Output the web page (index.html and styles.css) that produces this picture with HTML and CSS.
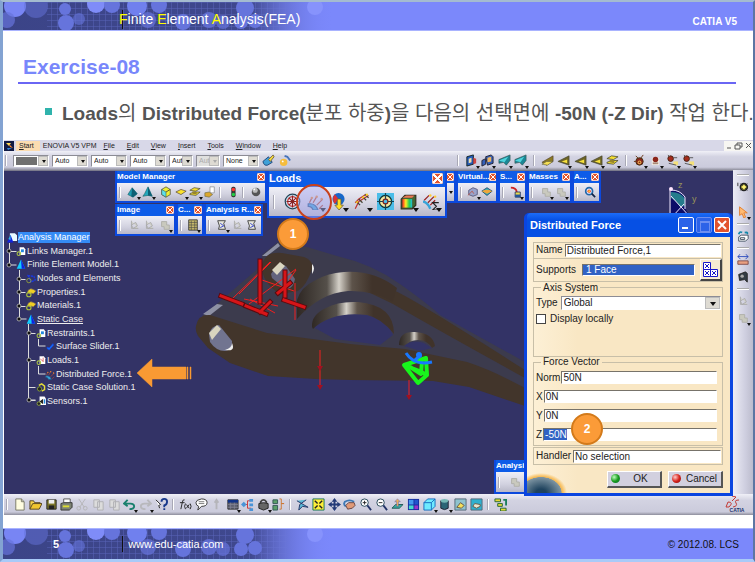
FILE: index.html
```html
<!DOCTYPE html>
<html lang="ko">
<head>
<meta charset="utf-8">
<title>Exercise-08</title>
<link rel="stylesheet" href="styles.css">
</head>
<body>
<svg class="defs" aria-hidden="true">
  <defs>
    <linearGradient id="fade" x1="0" x2="1"><stop offset="0" stop-color="#303873" stop-opacity=".85"/><stop offset=".75" stop-color="#303873" stop-opacity=".8"/><stop offset="1" stop-color="#7a87fa" stop-opacity="0"/></linearGradient>
    <pattern id="mesh" width="6" height="6" patternUnits="userSpaceOnUse"><path d="M0 .5H6M.5 0V6" stroke="#6b78d8" stroke-opacity=".5"/></pattern>
    <linearGradient id="shine" x1="0" x2="1"><stop offset="0" stop-color="#2f2824"/><stop offset=".3" stop-color="#55504a"/><stop offset=".42" stop-color="#d4d0c8"/><stop offset=".55" stop-color="#5d534a"/><stop offset=".75" stop-color="#40332a"/><stop offset="1" stop-color="#40332a"/></linearGradient>
    <linearGradient id="rain"><stop offset="0" stop-color="#f22"/><stop offset=".35" stop-color="#fe2"/><stop offset=".7" stop-color="#2c5"/><stop offset="1" stop-color="#2bd"/></linearGradient>
  </defs>
  <symbol id="bubbles" viewBox="0 0 330 30">
    <rect width="330" height="30" fill="url(#fade)"/>
    <rect x="44" width="240" height="30" fill="url(#mesh)" opacity=".6"/>
    <g fill="#6674dc"><circle cx="12" cy="4" r="11" fill="#7885f4"/><circle cx="33" cy="4" r="12" opacity=".5"/><circle cx="4" cy="18" r="8" opacity=".7"/><circle cx="62" cy="7" r="6"/><circle cx="63" cy="21" r="8"/><circle cx="76" cy="17" r="6" opacity=".6"/><circle cx="93" cy="2" r="9" fill="#7f8cf8"/><circle cx="109" cy="3" r="8"/><circle cx="134" cy="4" r="10" fill="#7080ee"/><circle cx="156" cy="3" r="8"/><circle cx="145" cy="18" r="8" opacity=".7"/><circle cx="180" cy="20" r="8"/><circle cx="206" cy="18" r="8" opacity=".8"/><circle cx="220" cy="20" r="7" opacity=".7"/><circle cx="242" cy="6" r="9"/><circle cx="238" cy="20" r="7"/><circle cx="252" cy="19" r="7"/><circle cx="312" cy="5" r="8" fill="#8793fc"/></g>
  </symbol>
  <symbol id="pyr" viewBox="0 0 14 14"><path d="M6 2 1 10l6 3 5-4z" fill="#1f9db4" stroke="#155" stroke-width=".6"/><path d="M6 2 5 12l2 1 5-4z" fill="#0d5f74"/></symbol>
  <symbol id="pyr2" viewBox="0 0 14 14"><path d="m7 1-4 8-2 3 6-1 5 1z" fill="#25a7bb" stroke="#155" stroke-width=".6"/><path d="M7 1v10l5 1z" fill="#0d5f74"/></symbol>
  <symbol id="cube" viewBox="0 0 14 14"><path d="m2 4 5-3 5 3v6l-5 3-5-3z" fill="#ee3" stroke="#443" stroke-width=".8"/><path d="m2 4 5 3v6l-5-3z" fill="#5de0e8" stroke="#344" stroke-width=".6"/><path d="m7 7 5-3" stroke="#443" fill="none"/></symbol>
  <symbol id="plate" viewBox="0 0 14 14"><path d="m1 7 6-3 6 2-6 4z" fill="#fbe32e" stroke="#543" stroke-width=".8"/></symbol>
  <symbol id="beam" viewBox="0 0 14 14"><path d="m1 5 5-3 7 1-5 3zM1 9l5-2 7 0-5 4-7-1z" fill="#f5df30" stroke="#443" stroke-width=".8"/><path d="m4 6 5 1v3l-5-1z" fill="#988628"/></symbol>
  <symbol id="part" viewBox="0 0 14 14"><path d="M7 1h5v7H7z" fill="#fff" stroke="#777" stroke-width=".7"/><path d="m1 8 5-1 4 3-4 3-5-1z" fill="#dba72c" stroke="#664" stroke-width=".7"/></symbol>
  <symbol id="light" viewBox="0 0 14 14"><rect x="5" y="1" width="5" height="12" rx="2" fill="#333"/><circle cx="7.500" cy="4" r="2" fill="#f33"/><circle cx="7.500" cy="10" r="2" fill="#2c4"/></symbol>
  <symbol id="ball" viewBox="0 0 14 14"><circle cx="7" cy="7" r="5" fill="#555"/><circle cx="6" cy="5" r="3" fill="#bbb"/><circle cx="5" cy="4" r="1" fill="#fff"/></symbol>
  <symbol id="ghost" viewBox="0 0 14 14"><path d="M4 2v9h8M4 7l5-3 2 4-5 3z" fill="#d0d0c8" stroke="#a9a9aa"/></symbol>
  <symbol id="ghost2" viewBox="0 0 14 14"><path d="M3 3h6v4h3v5H6V9H3z" fill="#c9c9be" stroke="#adada6"/></symbol>
  <symbol id="calc" viewBox="0 0 14 14"><path d="M2 1h10v12H2z" fill="#c6b96a" stroke="#333"/><path d="M2 4h10M2 7h10M2 10h10M5 2v11M9 2v11" stroke="#444" stroke-width=".7"/></symbol>
  <symbol id="report" viewBox="0 0 14 14"><path d="M2 2h9l-2 3 2 7H3l1-4z" fill="#e8e8de" stroke="#333"/><path d="m5 5 4 3-4 2" stroke="#23c" fill="none"/></symbol>
  <symbol id="target" viewBox="0 0 14 14"><circle cx="7" cy="7" r="6" fill="#c5e0ef" stroke="#245"/><circle cx="7" cy="7" r="4" fill="#eef" stroke="#c33"/><path d="M7 2v10M2 7h10M4 4l6 6M4 10l6-6" stroke="#822"/></symbol>
  <symbol id="dforce" viewBox="0 0 14 14"><path d="M1 9q6-1 8 5H5q-1-3-4-3z" fill="#38a4d8" stroke="#258"/><path d="M2 8l2-4M5 8l3-5M8 10l5-5M10 13l3-3" stroke="#b24b34"/><g fill="#e83"><circle cx="4" cy="4" r="1"/><circle cx="8" cy="3" r="1"/><circle cx="12" cy="5" r="1"/></g></symbol>
  <symbol id="grav" viewBox="0 0 14 14"><circle cx="7" cy="5" r="5" fill="#1768c8"/><path d="M4 1q-3 4 0 8L7 5z" fill="#d33"/><path d="M6 5h3v5h2l-3.500 4L4 10h2z" fill="#fd2" stroke="#653" stroke-width=".6"/></symbol>
  <symbol id="hatch" viewBox="0 0 14 14"><path d="M1 13 4 7l8-5M1 8l3-3 6-4" stroke="#b33" fill="none"/><path d="m2 7 3 3M4 5l3 3M7 3l3 3M9 1l3 3" stroke="#443"/><path d="m2 7 1 1M7 3l1 1M10 1l1 1" stroke="#fc2" stroke-width="2"/></symbol>
  <symbol id="bearing" viewBox="0 0 14 14"><rect width="14" height="14" fill="#4bbde8"/><circle cx="7" cy="7" r="5" fill="#f6e7a0" stroke="#133"/><path d="M7 0v14M0 7h14" stroke="#145"/><circle cx="7" cy="7" r="2" fill="#4bbde8" stroke="#722"/></symbol>
  <symbol id="therm" viewBox="0 0 14 14"><path d="m1 5 3-3h9v8l-3 3H1z" fill="#463" stroke="#332"/><path d="M2 5h8v7H2z" fill="url(#rain)"/><path d="m2 4 3-2h7l-2 2z" fill="#e75"/></symbol>
  <symbol id="sum" viewBox="0 0 14 14"><path d="M0 7q4 1 6 6" stroke="#38a4d8" stroke-width="2" fill="none"/><path d="m1 6 4-4M4 8l5-5M6 10l4-4" stroke="#922"/><path d="M13 8H8l3 3-3 3h5" stroke="#222" fill="none"/><circle cx="6" cy="2" r="1" fill="#fc3"/><circle cx="10" cy="3" r="1" fill="#fc3"/></symbol>
  <symbol id="virt" viewBox="0 0 14 14"><path d="m2 5 5-3 5 2v6l-5 2-5-2z" fill="#99a4cc" stroke="#557"/><path d="m1 11 5-5 2 3" stroke="#b54" fill="none"/></symbol>
  <symbol id="surf" viewBox="0 0 14 14"><path d="m1 6 6-4 6 4-6 5z" fill="#29b3c7" stroke="#246"/><path d="M1 6q6-3 12 0L7 9z" fill="#eea63a"/></symbol>
  <symbol id="sensor" viewBox="0 0 14 14"><path d="M1 2q6 0 7 5" stroke="#c22" stroke-width="2" fill="none"/><path d="M6 7h6v6H6z" fill="#e9d94d" stroke="#236"/><path d="M6 10h6v3H6z" fill="#259"/></symbol>
  <symbol id="mag" viewBox="0 0 14 14"><circle cx="6" cy="6" r="4" fill="#e8f6ff" stroke="#26a" stroke-width="2"/><path d="m9 9 4 4" stroke="#124" stroke-width="2"/><circle cx="6" cy="6" r="2" fill="#e43"/><circle cx="6" cy="6" r="1" fill="#fd3"/></symbol>
  <symbol id="magm" viewBox="0 0 14 14"><circle cx="6" cy="5" r="4" fill="#fff" stroke="#245"/><path d="m9 8 4 5" stroke="#236" stroke-width="2"/><path d="M4 5h4" stroke="#222"/></symbol>
  <symbol id="magp" viewBox="0 0 14 14"><circle cx="6" cy="5" r="4" fill="#fff" stroke="#245"/><path d="m9 8 4 5" stroke="#236" stroke-width="2"/><path d="M4 5h4M6 3v4" stroke="#222"/></symbol>
  <symbol id="frame" viewBox="0 0 14 14"><path d="m2 3 7-2v10l-7 2z" fill="#235bbb" stroke="#122"/><path d="m4 5 3-1v5l-3 1z" fill="#eda"/><path d="m9 4 3 1v5l-3 1z" fill="#c44"/></symbol>
  <symbol id="frame2" viewBox="0 0 14 14"><path d="m1 7 4-2v6l-4 2zM5 3l6-2 2 2v7l-6 2z" fill="#3460ba" stroke="#223"/><path d="m7 4 4-1v5L7 9z" fill="#eeb55f"/></symbol>
  <symbol id="wedge" viewBox="0 0 14 14"><path d="m1 6 12-5v6l-4 5-3-3-5 1z" fill="#1b8796" stroke="#355" stroke-width=".7"/><path d="m1 7 10-4-4 6z" fill="#4fd3dc"/></symbol>
  <symbol id="layer" viewBox="0 0 14 14"><path d="m1 9 5-3 7-4v6l-7 4z" fill="#8c7b25" stroke="#543" stroke-width=".7"/><path d="m1 11 5-3 7 0-6 4z" fill="#f5df55" stroke="#554" stroke-width=".6"/></symbol>
  <symbol id="layer2" viewBox="0 0 14 14"><path d="m1 8 12-6v10z" fill="#6d6426" stroke="#443" stroke-width=".7"/><path d="m5 8 6-2v4z" fill="#f7e13c"/></symbol>
  <symbol id="bug" viewBox="0 0 14 14"><circle cx="7" cy="8" r="4" fill="#8b251a" stroke="#431"/><path d="m3 2 3 3m5-4L8 5M1 8h2" stroke="#631"/><circle cx="7" cy="9" r="2" fill="#e8b351"/><circle cx="7" cy="9" r="1" fill="#8b251a"/></symbol>
  <symbol id="spot" viewBox="0 0 14 14"><path d="M3 4h8v8H3z" fill="#f4f0e8"/><circle cx="7" cy="6" r="3" fill="#8b251a"/><path d="M4 10h6" stroke="#a87" stroke-width="2"/></symbol>
  <symbol id="bug2" viewBox="0 0 14 14"><circle cx="5" cy="5" r="3" fill="#a42b1c" stroke="#421"/><path d="M8 8h5v4H8z" fill="#f5e17a"/><path d="m2 1 2 2M8 4h4M3 10l8 2" stroke="#555"/></symbol>
  <symbol id="brush" viewBox="0 0 14 14"><path d="m1 8 6-5 4 6-5 3q-4 1-5-4z" fill="#3fa0d8" stroke="#247"/><path d="m7 6 5-5 1 2-4 5z" fill="#f4da3b" stroke="#764"/></symbol>
  <symbol id="wand" viewBox="0 0 14 14"><circle cx="5" cy="9" r="4" fill="#f6bd3d"/><path d="m6 2 3 1 3 4" stroke="#4673ba" stroke-width="2" fill="none"/><circle cx="4" cy="8" r="1" fill="#fff"/></symbol>
  <symbol id="new" viewBox="0 0 14 14"><path d="M3 1h6l3 3v9H3z" fill="#fffde0" stroke="#776"/><path d="M9 1v3h3" fill="none" stroke="#776"/></symbol>
  <symbol id="open" viewBox="0 0 14 14"><path d="M1 12V3h4l1 2h6v2" fill="#f5d34a" stroke="#542"/><path d="m1 12 3-6h10l-3 6z" fill="#f0c52e" stroke="#542"/></symbol>
  <symbol id="save" viewBox="0 0 14 14"><path d="M2 2h10v10H2z" fill="#7e782a" stroke="#222"/><path d="M4 2h6v4H4z" fill="#eee"/><path d="M4 8h6v4H4z" fill="#222"/></symbol>
  <symbol id="print" viewBox="0 0 14 14"><path d="M4 5V1h7v4" fill="#fff" stroke="#555"/><path d="m1 6 3-1h9v5l-3 3H1z" fill="#7d8374" stroke="#333"/><path d="M3 9h7" stroke="#dd3" stroke-width="2"/></symbol>
  <symbol id="scis" viewBox="0 0 14 14"><path d="m3 1 6 9M10 1 4 10" stroke="#b5b5b8" fill="none"/><circle cx="3" cy="11" r="2" fill="none" stroke="#b5b5b8"/><circle cx="10" cy="11" r="2" fill="none" stroke="#b5b5b8"/></symbol>
  <symbol id="copy" viewBox="0 0 14 14"><path d="M2 2h6v8H2zM6 4h6v9H6z" fill="#dcdcdc" stroke="#b0b0b3"/></symbol>
  <symbol id="redo" viewBox="0 0 14 14"><path d="m9 2 4 4-4 3M12 6H6Q2 6 2 9t5 3" fill="none" stroke="#b8b8bc" stroke-width="2"/></symbol>
  <symbol id="undo" viewBox="0 0 14 14"><path d="m5 2-4 4 4 3M2 6h6q4 0 4 3t-5 3" fill="none" stroke="#19806e" stroke-width="2"/></symbol>
  <symbol id="up" viewBox="0 0 14 14"><path d="M7 12V3M5 5l2-3 2 3" stroke="#b5b5ba" stroke-width="2" fill="none"/></symbol>
  <symbol id="help" viewBox="0 0 14 14"><path d="m1 2 5 5-2 1 1 3" stroke="#222" fill="#fff"/><path d="M7 4q0-3 3-3t3 3-3 4v2M10 11v2" stroke="#17388b" stroke-width="2" fill="none"/></symbol>
  <symbol id="fx" viewBox="0 0 14 14"><path d="M6 2Q4 1 3.500 5L2 12M1 5h5M7 6l-1 3 1 3M8 7l3 4m0-4-3 4m4-5 1 3-1 3" stroke="#222" fill="none"/></symbol>
  <symbol id="talk" viewBox="0 0 14 14"><path d="M7 1q6 0 6 4T7 9l-4 4 1-4Q1 8 1 5t6-4z" fill="#fff" stroke="#333"/><path d="M4 4h6M4 6h6" stroke="#777"/></symbol>
  <symbol id="table" viewBox="0 0 14 14"><path d="M2 2h11v10H2z" fill="#5d6072" stroke="#333"/><path d="M2 2h11v3H2z" fill="#138"/><path d="M2 7h11M2 10h11M5 5v7M9 5v7" stroke="#889" stroke-width=".7"/></symbol>
  <symbol id="tree" viewBox="0 0 14 14"><path d="M2 7h5M11 3H7v8h4" stroke="#c33" fill="none"/><path d="m0 7 3-3 3 3-3 3zM9 1h4v3H9zM9 6h4v3H9zM9 11h4v3H9z" fill="#4a94d8"/></symbol>
  <symbol id="lock" viewBox="0 0 14 14"><path d="M4 6V4q3-4 6 0v2" fill="none" stroke="#444" stroke-width="2"/><path d="m2 6 5-1 5 1v5l-5 2-5-2z" fill="#666" stroke="#222"/></symbol>
  <symbol id="rule" viewBox="0 0 14 14"><path d="M1 2h5v4H1zM1 8h5v5H1z" fill="#5aa06a" stroke="#355"/><path d="M8 1h2v5h3-3v6H8" stroke="#c73" fill="none"/></symbol>
  <symbol id="plane" viewBox="0 0 14 14"><path d="m1 3 12 7-6-1-4 4 1-6 7-5" fill="#5bb9d5" stroke="#236"/></symbol>
  <symbol id="fit" viewBox="0 0 14 14"><path d="M1 1h12v12H1z" fill="#ffee38" stroke="#15735c"/><path d="m3 3 3 3m5-3L8 6m-5 5 3-3m5 3L8 8" stroke="#222" stroke-width="1.500"/></symbol>
  <symbol id="move" viewBox="0 0 14 14"><path d="M7 2v10M2 7h10" stroke="#243b78" stroke-width="2"/><path d="M7 0 4 4h6zM7 14l-3-4h6zM0 7l4-3v6zM14 7l-4-3v6z" fill="#243b78"/></symbol>
  <symbol id="rot" viewBox="0 0 14 14"><path d="M12 4Q7 1 2 4q-2 3 1 5" fill="none" stroke="#3c78b5" stroke-width="2"/><path d="m3 8 3-3h6l1 3-3 3-5 1z" fill="#e09a78" stroke="#644"/></symbol>
  <symbol id="norm" viewBox="0 0 14 14"><path d="m1 11 4-4h8l-4 4z" fill="#35ad9f" stroke="#255"/><path d="m4 4 3-3 3 3-2 0v5H6V4z" fill="#efb45a" stroke="#55a" stroke-width=".5"/></symbol>
  <symbol id="quad" viewBox="0 0 14 14"><path d="M1 1h12v12H1z" fill="#182ea0"/><path d="M2 2h5v5H2z" fill="#49e"/><path d="M8 2h4v5H8z" fill="#25c"/><path d="M2 8h5v4H2z" fill="#4dc"/><path d="M8 8h4v4H8z" fill="#93c"/></symbol>
  <symbol id="iso" viewBox="0 0 14 14"><path d="m1 5 4-4h8v8l-4 4H1z" fill="#6feaff" stroke="#146cc0"/><path d="M1 5h8v8M9 5l4-4" fill="none" stroke="#146cc0"/></symbol>
  <symbol id="cyl" viewBox="0 0 14 14"><path d="M3 3v8q4 3 8 0V3z" fill="#2b6576" stroke="#223"/><ellipse cx="7" cy="3" rx="4" ry="2" fill="#74b8b6"/></symbol>
  <symbol id="pic" viewBox="0 0 14 14"><path d="M1 1h12v12H1z" fill="#8fc3cf" stroke="#567"/><path d="m3 10 4-5 4 3-3 3z" fill="#f4df5a" stroke="#654"/></symbol>
  <symbol id="pic2" viewBox="0 0 14 14"><path d="M1 1h12v12H1z" fill="#2fb0cf" stroke="#567"/><path d="m3 9 2-3 6 1 0 2-4 2z" fill="#e9e6cf" stroke="#654"/></symbol>
  <symbol id="tree2" viewBox="0 0 14 14"><path d="M1 1h6v3H1zM4 6h5v3H4zM7 11h6v3H7z" fill="#e8d934" stroke="#263"/><path d="M10 2h3v6" stroke="#1a7e5b" stroke-width="2" fill="none"/></symbol>
  <symbol id="gear" viewBox="0 0 14 14"><path d="M1 2v4" stroke="#222"/><circle cx="8" cy="7" r="4" fill="#d0cb42" stroke="#222" stroke-width="2"/><path d="m4 3 8 8M12 3l-8 8" stroke="#222"/><circle cx="8" cy="7" r="2" fill="#fff17a"/></symbol>
  <symbol id="cursor" viewBox="0 0 14 14"><path d="m3 1 9 7H8l2 5-2 1-2-5-3 2z" fill="#ffbb72" stroke="#e17a28"/></symbol>
  <symbol id="cam" viewBox="0 0 14 14"><path d="m2 8 3-2h8v4l-3 3H2z" fill="#fff" stroke="#345"/><path d="M2 5q1-4 4-2m3 0q4-1 3 2" fill="none" stroke="#18a" stroke-width="2"/><path d="M4 9h5v2H4z" fill="none" stroke="#345"/></symbol>
  <symbol id="meas" viewBox="0 0 14 14"><path d="M1 3h12M4 0 1 3l3 3M10 0l3 3-3 3" fill="none" stroke="#24b"/><path d="M1 8h12v4H1z" fill="#e9a081" stroke="#744"/></symbol>
  <symbol id="motor" viewBox="0 0 14 14"><path d="m2 4 8-3 2 2v10l-3-3-6 1z" fill="#333d45" stroke="#222"/><circle cx="6" cy="6" r="2" fill="#aaa"/></symbol>
  <symbol id="leaf" viewBox="0 0 14 14"><path d="M3 4q3-4 8-1l3 2-4 4-2-1q-4 2-6-1z" fill="#f0cf24" stroke="#765"/><circle cx="4" cy="10" r="3" fill="none" stroke="#b1c63a" stroke-width="1.500"/></symbol>
  <symbol id="root" viewBox="0 0 14 14"><path d="M4 1h7l3 3v8H4z" fill="#e9fbff"/><path d="m5 3-5 11h9z" fill="#12d"/><path d="m5 3-3 6 3 2z" fill="#3bd"/></symbol>
  <symbol id="fem" viewBox="0 0 14 14"><path d="M7 0 1 13h12z" fill="#1cf"/><path d="m7 0 1 13h5z" fill="#12d"/></symbol>
  <symbol id="doc" viewBox="0 0 14 14"><path d="M5 1h6l2 3v8H5z" fill="#fff"/><path d="M7 4h4v4H7z" fill="#28d"/><circle cx="4" cy="10" r="2.500" fill="none" stroke="#a7c243" stroke-width="1.500"/></symbol>
  <symbol id="docr" viewBox="0 0 14 14"><path d="M5 1h6l2 3v8H5z" fill="#fff"/><path d="m6 5 4 3m0-5v6" stroke="#d44"/><circle cx="4" cy="10" r="2.500" fill="none" stroke="#a7c243" stroke-width="1.500"/></symbol>
  <symbol id="sens" viewBox="0 0 14 14"><path d="M5 0h7l2 3v9H5z" fill="#fff"/><path d="m10 3-5 4 5 4z" fill="#222"/><path d="M12 4v6" stroke="#28d" stroke-width="2"/><circle cx="4" cy="10" r="2.500" fill="#222" stroke="#a7c243"/></symbol>
  <symbol id="node" viewBox="0 0 14 14"><path d="m3 3 8 1 2 5-6 3z" fill="none" stroke="#1b39e0" stroke-width="2" stroke-dasharray="3 1"/><circle cx="4" cy="10" r="3" fill="none" stroke="#a9bb35"/></symbol>
  <symbol id="slide" viewBox="0 0 14 14"><path d="m3 8 3 1 5-6 1 2-6 7-3-2z" fill="#1478f8" stroke="#14e"/></symbol>
  <symbol id="solve" viewBox="0 0 14 14"><path d="m4 4 4-2 4 3v5l-4 2" fill="none" stroke="#e6df38" stroke-width="2"/><circle cx="5" cy="9" r="3" fill="#222" stroke="#9cba35"/></symbol>
  <symbol id="cell" viewBox="0 0 15 15"><path d="M0 0h8v15H0zM7 7h8v8H7z" fill="#fff"/><path d="M.5.500h7v7h-7zM.5 7.500h7v7h-7zM7.500 7.500h7v7h-7zM2 2l4 4m0-4-4 4m0 3 4 4m0-4-4 4m7-4 4 4m0-4-4 4" fill="none" stroke="#1616c8"/></symbol>
</svg>

<header class="band">
  <svg class="bubbles" aria-hidden="true"><use href="#bubbles"/></svg>
  <span class="course"><b>F</b>inite <b>E</b>lement <b>A</b>nalysis(FEA)</span>
  <strong class="product">CATIA V5</strong>
</header>

<main class="slide">
  <h1>Exercise-08</h1>
  <p class="task"><strong>Loads</strong>의 <strong>Distributed Force(</strong>분포 하중<strong>)</strong>을 다음의 선택면에 <strong>-50N (-Z Dir)</strong> 작업 한다.</p>

  <section class="app">
    <nav class="menu">
      <svg class="logo" viewBox="0 0 10 10"><path fill="#111a44" d="M0 0h10v10H0z"/><path d="M2 2h5L5 5z" fill="#fd5"/><path d="M3 7h5l-4 2z" fill="#38d"/><path d="m5 3 4 4-3-1z" fill="#f83"/></svg>
      <a class="start" href="#"><u>S</u>tart</a><a class="wide" href="#">ENOVIA V5 VPM</a><a href="#"><u>F</u>ile</a><a href="#"><u>E</u>dit</a><a href="#"><u>V</u>iew</a><a href="#"><u>I</u>nsert</a><a href="#"><u>T</u>ools</a><a href="#"><u>W</u>indow</a><a href="#"><u>H</u>elp</a>
      <span class="winctl"><svg viewBox="0 0 25 8"><path d="M1 6h4M9 3h5v4H9zM11 3V1h5v4h-2M20 1l5 5m0-5-5 5" fill="none" stroke="#555"/></svg></span>
    </nav>

    <div class="bar top">
      <i class="grip"></i>
      <span class="pick c36 swatch"><select aria-label="Color"><option></option></select></span>
      <span class="pick c36"><select aria-label="Transparency"><option>Auto</option></select></span>
      <span class="pick c36"><select aria-label="Line thickness"><option>Auto</option></select></span>
      <span class="pick c36"><select aria-label="Line type"><option>Auto</option></select></span>
      <span class="pick c24"><select aria-label="Point symbol"><option>Aut</option></select></span>
      <span class="pick c24 off"><select aria-label="Render style" disabled><option>Aut</option></select></span>
      <span class="pick c36"><select aria-label="Layer"><option>None</option></select></span>
      <span class="tools w30"><button aria-label="Painter"><svg><use href="#brush"/></svg></button><button aria-label="Wizard"><svg><use href="#wand"/></svg></button></span>
      <span class="push"></span>
      <i class="grip"></i>
      <span class="tools w62"><button class="more" aria-label="Frame"><svg><use href="#frame"/></svg></button><button class="more" aria-label="Frames"><svg><use href="#frame2"/></svg></button><button class="more" aria-label="Cut"><svg><use href="#wedge"/></svg></button><button class="more" aria-label="Trim"><svg><use href="#wedge"/></svg></button></span>
      <i class="grip"></i>
      <span class="tools w78"><button aria-label="Mesh"><svg><use href="#layer"/></svg></button><button class="more" aria-label="Mesh part"><svg><use href="#layer2"/></svg></button><button class="more" aria-label="Mesh edge"><svg><use href="#layer2"/></svg></button><button class="more" aria-label="Mesh face"><svg><use href="#layer2"/></svg></button><button class="more" aria-label="Mesh solid"><svg><use href="#beam"/></svg></button></span>
      <i class="grip"></i>
      <span class="tools w62"><button class="more" aria-label="Weld"><svg><use href="#bug"/></svg></button><button class="more" aria-label="Spot"><svg><use href="#spot"/></svg></button><button class="more" aria-label="Seam"><svg><use href="#bug2"/></svg></button><button class="more" aria-label="Points"><svg><use href="#bug2"/></svg></button></span>
    </div>

    <div class="work">
      <div class="view">
        <svg class="scene" aria-label="3D model">
          <g transform="translate(-4 -170)">
            <path d="M671 190q9 0 14 7v11l5 9-19-1z" fill="#0c0c68"/><path d="M671 192q10 0 14 7v7l-5 1q-3-6-9-9z" fill="#257c8c"/>
            <path d="M670 190v28M671 190q9 0 14 7v12M671 196l20 22M684 204l-12 13" stroke="#efe6ff" fill="none"/>
            <circle cx="671" cy="189" r="2" fill="#ffe5ff"/>
            <g fill="#9a955b" font-size="9"><text x="678" y="188">z</text><text x="692" y="202">y</text></g>
            <path fill="#3c3b4d" d="M202 316 218 303l44-38v-10l16-13 29 5 30 9q35 8 63 28t40 31l85 47v25l-60-10-60-20-182-20-21-21z"/>
            <path d="M203 314 217 304l6 1-14 11zM262 256l16-13 2 3-13 10z" fill="#8e91a5"/>
            <path fill="#42352b" d="M262 265q3-14 20-12l22 4q10 4 8 12-5 16-14 22l-18 3q-19-12-18-29z"/>
            <path fill="#42352b" d="M362 289 393 290q18 7 132 80v8q-80-44-132-74z"/>
            <path fill="url(#shine)" d="M297 319v-19q4-13 17-19 13-8 30-9 30-2 53 16l-4 14q-20-12-45-11-28 2-51 28z"/>
            <path fill="#333366" d="M313 327q8-17 30-23 35-5 50 31l-13 10-45-6z"/>
            <path fill="url(#shine)" d="M312 327q-1-12 14-19 12-7 32-6 36 3 36 32-13-16-27-19-35-4-54 14z"/>
            <path fill="url(#shine)" d="M399 345q0-14 16-13 18 1 20 14l-3 2q-5-8-14-8t-12 6z"/><path fill="#333366" d="M404 346q8-7 20-3l8 5-12 3z"/>
            <path fill="#42352b" d="M196 326q2-12 14-11l57 18 83 11 55 5 62 13q25 8 58 26v18l-56-19-36-6-83-1-34-1-48-3-38-13-22-15-10-12q-3-5-2-10z"/>
            <path fill="#63647d" d="M271 274q7-12 15-8l9 13q-2 12-11 9l-12-10z"/><path fill="#d9d5bf" d="m272 270 8-8 5 4-8 9z"/>
            <path fill="#717490" d="M209 334q2-8 10-9l13 16q1 9-7 10-9 0-15-9z"/><path fill="#d9d5bf" d="m209 333 8-8 4 4-9 11z"/><path fill="#eee" d="M225 350q7-2 7-7 4 9-7 7zM312 264q4 4 0 10z"/>
            <g stroke="#f02020" fill="none"><path d="m232 299 38-37M239 294l32-32M249 304l47-35M262 280l32 11M244 299l34 7M295 283v37M289 280l7-10M320 350v38M409 380v17M250 299l25 14"/></g>
            <g stroke="#5a0b10" stroke-width="5" stroke-linecap="square"><path d="m221 296 21 8M246 306l20 8M260 261v41M285 272v24M284 300l20 7M278 293l12-10M260 312l10-10"/></g>
            <g stroke="#d61518" stroke-width="3" stroke-linecap="square"><path d="m221 296 21 8M246 306l20 8M260 261v41M285 272v24M284 300l20 7M278 293l12-10M260 312l10-10"/></g>
            <path fill="#a01020" d="m317 366 3 5 3-5zM317 385l3 5 3-5zM406 395l3 5 3-5z"/>
            <path d="m404 365 22-7 1 17-9 8zM404 365l18 7 4 3M407 365l14 9 1-13" fill="none" stroke="#18f51c" stroke-width="4" stroke-linejoin="round"/>
            <path d="M406 353q8 13 26 9M415 360l6-5" fill="none" stroke="#1878ff" stroke-width="3"/><circle cx="419" cy="355" r="3" fill="#1878ff"/>
            <path fill="#f99a33" d="m137 373 15-14v8h34v12h-34v8zM187 367h1v12h-1zM190 367h1v12h-1z" stroke="#f99a33" stroke-width=".5"/>
            <path d="M9.500 243v22h7M19.500 270v49h7M28.500 324v76h7M9.500 251.500h7M19.500 279.500h6M19.500 292.500h6M19.500 306.500h6M28.500 333.500h7M28.500 360.500h7M28.500 387.500h7M28.500 400.500h7M38.500 339v7h7M38.500 366v8h7" fill="none" stroke="#ddd"/>
            <g fill="#111" stroke="#bbb" stroke-width=".8"><circle cx="9" cy="251" r="2"/><circle cx="9" cy="265" r="2"/><circle cx="19" cy="279" r="2"/><circle cx="19" cy="292" r="2"/><circle cx="19" cy="306" r="2"/><circle cx="19" cy="319" r="2"/><circle cx="29" cy="333" r="2"/><circle cx="29" cy="360" r="2"/><circle cx="29" cy="400" r="2"/></g>
          </g>
        </svg>

        <ul class="spec">
          <li><svg><use href="#root"/></svg><mark>Analysis Manager</mark></li>
          <li class="l1"><svg><use href="#doc"/></svg>Links Manager.1</li>
          <li class="l1"><svg><use href="#fem"/></svg>Finite Element Model.1</li>
          <li class="l2"><svg><use href="#node"/></svg>Nodes and Elements</li>
          <li class="l2"><svg><use href="#leaf"/></svg>Properties.1</li>
          <li class="l2"><svg><use href="#leaf"/></svg>Materials.1</li>
          <li class="l2"><svg><use href="#fem"/></svg><u>Static Case</u></li>
          <li class="l3"><svg><use href="#doc"/></svg>Restraints.1</li>
          <li class="l4"><svg><use href="#slide"/></svg>Surface Slider.1</li>
          <li class="l3"><svg><use href="#docr"/></svg>Loads.1</li>
          <li class="l4"><svg><use href="#dforce"/></svg>Distributed Force.1</li>
          <li class="l3"><svg><use href="#solve"/></svg>Static Case Solution.1</li>
          <li class="l3"><svg><use href="#sens"/></svg>Sensors.1</li>
        </ul>

        <section class="pal p-model"><h2>Model Manager<button class="x" aria-label="Close"></button></h2>
          <div><i class="grip"></i><button class="more" aria-label="Octree"><svg><use href="#pyr"/></svg></button><button class="more" aria-label="Element"><svg><use href="#pyr2"/></svg></button><i></i><button aria-label="3D"><svg><use href="#cube"/></svg></button><button class="more" aria-label="2D"><svg><use href="#plate"/></svg></button><button class="more" aria-label="1D"><svg><use href="#beam"/></svg></button><button aria-label="Property"><svg><use href="#part"/></svg></button><i class="grip"></i><button aria-label="Check"><svg><use href="#light"/></svg></button><i class="grip"></i><button aria-label="Material"><svg><use href="#ball"/></svg></button></div></section>
        <section class="pal p-image"><h2>Image<button class="x" aria-label="Close"></button></h2>
          <div><i class="grip"></i><button disabled aria-label="Deformation"><svg><use href="#ghost"/></svg></button><button disabled aria-label="Stress"><svg><use href="#ghost"/></svg></button><button class="more" disabled aria-label="Displacement"><svg><use href="#ghost2"/></svg></button></div></section>
        <section class="pal p-comp"><h2>C...<button class="x" aria-label="Close"></button></h2>
          <div><i class="grip"></i><button class="more" aria-label="Compute"><svg><use href="#calc"/></svg></button></div></section>
        <section class="pal p-res"><h2>Analysis R...<button class="x" aria-label="Close"></button></h2>
          <div><i class="grip"></i><button class="more" aria-label="Report"><svg><use href="#report"/></svg></button><button disabled aria-label="History"><svg><use href="#ghost"/></svg></button><button aria-label="Listing"><svg><use href="#report"/></svg></button></div></section>
        <section class="pal p-rest"><h2><button class="x" aria-label="Close"></button></h2><div><button class="more" aria-label="Restraint"></button></div></section>
        <section class="pal p-virt"><h2>Virtual...<button class="x" aria-label="Close"></button></h2>
          <div><i class="grip"></i><button class="more" aria-label="Rigid part"><svg><use href="#virt"/></svg></button><button aria-label="Contact part"><svg><use href="#surf"/></svg></button></div></section>
        <section class="pal p-sol"><h2>S...<button class="x" aria-label="Close"></button></h2>
          <div><i class="grip"></i><button class="more" aria-label="Storage"><svg><use href="#sensor"/></svg></button></div></section>
        <section class="pal p-mass"><h2>Masses<button class="x" aria-label="Close"></button></h2>
          <div><i class="grip"></i><button class="more" disabled aria-label="Mass"><svg><use href="#ghost2"/></svg></button><button class="more" disabled aria-label="Inertia"><svg><use href="#ghost2"/></svg></button></div></section>
        <section class="pal p-adapt"><h2>A...<button class="x" aria-label="Close"></button></h2>
          <div><i class="grip"></i><button aria-label="Adaptivity"><svg><use href="#mag"/></svg></button></div></section>
        <section class="pal p-tools"><h2>Analysis</h2>
          <div><i class="grip"></i><button disabled aria-label="Sets"><svg><use href="#ghost2"/></svg></button><button disabled aria-label="Ids"><svg><use href="#ghost2"/></svg></button></div></section>

        <section class="pal big p-loads"><h2>Loads<button class="x" aria-label="Close"></button></h2>
          <div><i class="grip"></i><button aria-label="Pressure"><svg><use href="#target"/></svg></button><button class="more" aria-label="Distributed Force"><svg><use href="#dforce"/></svg></button><button class="more" aria-label="Acceleration"><svg><use href="#grav"/></svg></button><button class="more" aria-label="Line Force Density"><svg><use href="#hatch"/></svg></button><button aria-label="Bearing"><svg><use href="#bearing"/></svg></button><button class="more" aria-label="Temperature"><svg><use href="#therm"/></svg></button><button class="more" aria-label="Combined Loads"><svg><use href="#sum"/></svg></button></div></section>
        <span class="ring"></span>
        <span class="step s1">1</span>
      </div>

      <div class="side">
        <i></i><button aria-label="Update"><svg><use href="#gear"/></svg></button>
        <button class="more" aria-label="Select"><svg><use href="#cursor"/></svg></button>
        <i></i><button aria-label="View"><svg><use href="#cam"/></svg></button>
        <i></i><button aria-label="Measure"><svg><use href="#meas"/></svg></button>
        <button aria-label="Apply material"><svg><use href="#motor"/></svg></button>
        <i></i><button disabled aria-label="Axis"><svg><use href="#ghost"/></svg></button>
        <button class="more" disabled aria-label="Group"><svg><use href="#ghost2"/></svg></button>
      </div>

      <form class="dialog">
        <h2>Distributed Force <span class="ctl"><button type="button" class="min" aria-label="Minimize"></button><button type="button" class="max" aria-label="Maximize" disabled></button><button type="button" class="close" aria-label="Close"><svg viewBox="0 0 10 10"><path d="m1 1 8 8m0-8L1 9" stroke="#fff" stroke-width="2"/></svg></button></span></h2>
        <div class="pane">
          <div class="row framed"><label for="name">Name</label><input id="name" value="Distributed Force,1"></div>
          <div class="row framed sup"><label for="sup">Supports</label><input id="sup" class="face" value="1 Face"><button type="button" class="cells" aria-label="Select supports"><svg><use href="#cell"/></svg></button></div>
          <fieldset class="axis"><legend>Axis System</legend>
            <div class="row"><label for="type">Type</label><span class="pick large"><select id="type"><option>Global</option></select></span></div>
            <label class="check"><input type="checkbox"> Display locally</label>
          </fieldset>
          <fieldset class="vec"><legend>Force Vector</legend>
            <div class="row"><label for="n">Norm</label><input id="n" value="50N"></div>
            <div class="row"><label for="fx-x">X</label><input id="fx-x" value="0N"></div>
            <div class="row"><label for="fx-y">Y</label><input id="fx-y" value="0N"></div>
            <div class="row"><label for="fx-z">Z</label><span class="sel"><input id="fx-z" value="-50N"></span></div>
          </fieldset>
          <div class="row framed hand"><label for="h">Handler</label><input id="h" value="No selection"></div>
          <div class="actions">
            <button type="button"><i class="dot green"></i><span>OK</span></button><button type="button"><i class="dot red"></i><span>Cancel</span></button>
          </div>
        </div>
        <span class="step s2">2</span>
      </form>
    </div>

    <div class="bar bottom">
      <i class="grip"></i>
      <span class="tools w155"><button aria-label="New"><svg><use href="#new"/></svg></button><button aria-label="Open"><svg><use href="#open"/></svg></button><button aria-label="Save"><svg><use href="#save"/></svg></button><button aria-label="Print"><svg><use href="#print"/></svg></button><button disabled aria-label="Cut"><svg><use href="#scis"/></svg></button><button disabled aria-label="Copy"><svg><use href="#copy"/></svg></button><button disabled aria-label="Paste"><svg><use href="#copy"/></svg></button><button class="more" aria-label="Undo"><svg><use href="#undo"/></svg></button><button class="more" disabled aria-label="Redo"><svg><use href="#redo"/></svg></button><button aria-label="What's this"><svg><use href="#help"/></svg></button></span>
      <i class="grip"></i>
      <span class="tools w106"><button aria-label="Formula"><svg><use href="#fx"/></svg></button><button aria-label="Comment"><svg><use href="#talk"/></svg></button><button disabled aria-label="Check"><svg><use href="#up"/></svg></button><button class="more" aria-label="Design table"><svg><use href="#table"/></svg></button><button aria-label="Inspector"><svg><use href="#tree"/></svg></button><button class="more" aria-label="Lock"><svg><use href="#lock"/></svg></button><button aria-label="Equivalent dimensions"><svg><use href="#rule"/></svg></button></span>
      <i class="grip"></i>
      <span class="tools w187"><button aria-label="Fly"><svg><use href="#plane"/></svg></button><button aria-label="Fit all"><svg><use href="#fit"/></svg></button><button aria-label="Pan"><svg><use href="#move"/></svg></button><button aria-label="Rotate"><svg><use href="#rot"/></svg></button><button aria-label="Zoom in"><svg><use href="#magp"/></svg></button><button aria-label="Zoom out"><svg><use href="#magm"/></svg></button><button aria-label="Normal view"><svg><use href="#norm"/></svg></button><button aria-label="Multi view"><svg><use href="#quad"/></svg></button><button class="more" aria-label="Isometric"><svg><use href="#iso"/></svg></button><button class="more" aria-label="Shading"><svg><use href="#cyl"/></svg></button><button aria-label="Hide"><svg><use href="#pic"/></svg></button><button aria-label="Swap"><svg><use href="#pic2"/></svg></button></span>
      <i class="grip"></i>
      <span class="tools"><button aria-label="Model tree"><svg><use href="#tree2"/></svg></button></span>
      <span class="push"></span>
      <span class="ds"><svg viewBox="0 0 22 12"><path d="M7 0l4 1-4 4M3 6q6 0 1 5H1zM14 4q-5 0-3 3t-3 4" fill="none" stroke="#c33b35"/></svg>CATIA</span>
    </div>
  </section>
</main>

<footer class="band foot">
  <svg class="bubbles" aria-hidden="true"><use href="#bubbles"/></svg>
  <strong class="page">5</strong>
  <a href="#">www.edu-catia.com</a>
  <span class="copy">© 2012.08. LCS</span>
</footer>
</body>
</html>
```
FILE: styles.css
```css
* { box-sizing: border-box; }
body {
  margin: 0;
  min-height: 100vh;
  display: flex;
  flex-direction: column;
  border-top: 2px solid #a4bbd0;
  border-right: 2px solid #5c76a3;
  border-bottom: 3px solid #a9caf8;
  border-left: 3px solid #83a3d2;
  background: #fff;
  font-family: "Liberation Sans", "Noto Sans CJK KR", sans-serif;
}
.defs { position: absolute; width: 0; height: 0; }
button { padding: 0; border: 0; background: none; font: inherit; color: inherit; }
a { color: inherit; text-decoration: none; }
h1, h2, p, ul { margin: 0; padding: 0; }

/* Slide bands */
.band {
  position: relative;
  height: 29px;
  display: flex;
  align-items: center;
  background: #7b88fb;
  border-bottom: 1px solid #a9b3ff;
  color: #fff;
  overflow: hidden;
}
.bubbles { position: absolute; left: 0; top: 0; width: 330px; height: 30px; }
.band > :not(.bubbles) { position: relative; }
.course { padding: 6px 0 0 1px; margin-left: 115px; font-size: 14px; }
.course::before {
  content: "";
  position: absolute;
  left: 4px;
  top: 5px;
  height: 19px;
  border-left: 1px solid #111;
}
.course b { color: #ff0; font-weight: 400; position: relative; }
.product { margin: 10px 16px 0 auto; font-size: 10px; }
.foot { height: 31px; border-top: 1px solid #a9b3ff; border-bottom: 0; margin-top: auto; font-size: 11px; }
.foot a { border-left: 1px solid #111; margin-left: 63px; padding: 2px 0 2px 5px; }
.page { margin-left: 50px; }
.foot .copy { margin: 0 14px 0 auto; font-size: 10px; color: #111; }

.slide { display: flex; flex-direction: column; }
h1 {
  margin: 24px 17px 0 15px;
  padding: 0 0 3px 5px;
  border-bottom: 2px solid #6a66f4;
  color: #7887fb;
  font-size: 21px;
  line-height: 24px;
}
.task {
  margin: 13px 0 10px 42px;
  padding-left: 17px;
  position: relative;
  color: #555;
  font-size: 20px;
  line-height: 32px;
  white-space: nowrap;
}
.task::before { content: ""; position: absolute; left: 0; top: 11px; width: 7px; height: 7px; background: #2fb3ac; }
.task strong { font-size: 19px; }

/* Application chrome */
.app { margin-left: 1px; display: flex; flex-direction: column; }
.menu {
  height: 11px;
  display: flex;
  align-items: center;
  gap: 12px;
  background: #d8d8e8;
  color: #222;
  font-size: 7px;
  line-height: 10px;
}
.menu .logo { width: 10px; height: 10px; margin-right: -10px; }
.menu .start { background: #fbdcb0; padding: 0 6px 0 3px; margin-right: -9px; }
.menu .wide { margin-right: -5px; }
.winctl { margin-left: auto; background: #f7f6f2; padding: 1px 2px; }
.winctl svg { display: block; width: 25px; height: 8px; }
.bar {
  height: 19px;
  display: flex;
  align-items: center;
  gap: 3px;
  padding: 0 4px 0 2px;
  background: linear-gradient(#f0f0f7, #d3d3e2 30%, #cbcbdc 85%, #8e8e9c);
}
.bar.top { padding: 0 55px 0 1px; }
.top .tools { margin-right: 3px; }
.bar.bottom { height: 21px; gap: 4px; }
.grip { width: 2px; height: 11px; margin-right: 3px; border-left: 1px solid #a8a8b5; border-right: 1px solid #fff; flex: none; }
.bottom .grip { margin-right: 1px; }
.push { flex: 1; }
.tools { display: flex; justify-content: space-between; }
.w30 { width: 30px; } .w62 { width: 62px; } .w78 { width: 78px; }
.w106 { width: 106px; } .w155 { width: 155px; } .w187 { width: 187px; }
.tools button, .pal button, .side button { position: relative; display: block; }
.tools svg { display: block; width: 13px; height: 13px; }
.more::after {
  content: "";
  position: absolute;
  right: -2px;
  bottom: -2px;
  border: 2px solid transparent;
  border-top: 3px solid #111;
  border-bottom: 0;
}
.pick { position: relative; display: block; height: 12px; border: 1px solid #8c8c95; border-right-color: #fff; border-bottom-color: #fff; background: #fff; }
.pick select { appearance: none; display: block; width: 100%; height: 100%; border: 0; padding: 0 0 0 2px; background: none; color: #222; font: 7px/10px "Liberation Sans", sans-serif; }
.pick select:disabled { color: #aaa; background: #e0e0df; opacity: 1; }
.pick::before { content: ""; position: absolute; right: 0; top: 0; bottom: 0; width: 8px; background: #dedbd3; border: 1px solid #bbb; pointer-events: none; }
.pick::after { content: ""; position: absolute; right: 2px; top: 4px; border: 2px solid transparent; border-top: 3px solid #111; border-bottom: 0; pointer-events: none; }
.off::after { border-top-color: #aaa; }
.c36 { width: 36px; } .c24 { width: 24px; }
.swatch select { background: #707070 content-box; padding: 1px 11px 1px 2px; }

.work { position: relative; display: flex; }
.view { position: relative; flex: 1; height: 324px; background: #333366; overflow: hidden; border-top: 1px solid #7b7b8c; }
.scene { position: absolute; left: 0; top: -1px; width: 100%; height: 324px; }
.side { width: 20px; background: linear-gradient(90deg, #ececf5, #cfcfe0 60%, #bcbccd); display: flex; flex-direction: column; align-items: center; gap: 5px; padding-top: 4px; }
.side svg { display: block; width: 12px; height: 12px; }
.side button:nth-of-type(2) { margin-top: 8px; }
.side i { width: 12px; border-top: 1px solid #aaa; border-bottom: 1px solid #fff; flex: none; }

/* Specification tree */
.spec {
  position: absolute;
  left: 3px;
  top: 61px;
  height: 175px;
  display: flex;
  flex-direction: column;
  justify-content: space-between;
  list-style: none;
  color: #eee;
  font-size: 9px;
  line-height: 11px;
}
.spec li { display: flex; align-items: center; gap: 1px; white-space: nowrap; }
.spec svg { width: 10px; height: 11px; flex: none; }
.spec mark { background: #348bf5; color: #fff; }
.l1 { padding-left: 9px; } .l2 { padding-left: 19px; } .l3 { padding-left: 29px; } .l4 { padding-left: 38px; }

/* Floating palettes */
.pal { position: absolute; display: flex; flex-direction: column; height: 32px; border: 2px solid #0c49dd; border-top: 0; background: #0c49dd; }
.pal h2 { height: 12px; display: flex; align-items: center; justify-content: space-between; background: #0d5ce8; color: #fff; font-size: 8px; line-height: 12px; white-space: nowrap; overflow: hidden; }
.pal > div { flex: 1; display: flex; align-items: center; justify-content: space-between; padding: 0 3px 0 2px; background: linear-gradient(#efeff6, #d2d2e0 60%, #b8b8c8); }
.pal svg { display: block; width: 12px; height: 12px; }
.pal .x { width: 8px; height: 8px; flex: none; border: 1px solid #f6cfc2; border-radius: 1px; background: linear-gradient(45deg, transparent 44%, #fff 44% 56%, transparent 56%), linear-gradient(-45deg, transparent 44%, #fff 44% 56%, transparent 56%), #e2552d; }
.p-model { left: 111px; top: 0; width: 152px; }
.p-image { left: 111px; top: 33px; width: 61px; }
.p-comp { left: 172px; top: 33px; width: 28px; }
.p-res { left: 200px; top: 33px; width: 59px; }
.p-rest { left: 430px; top: 0; width: 22px; }
.p-rest > div, .p-rest h2 { justify-content: flex-end; }
.p-virt { left: 452px; top: 0; width: 42px; }
.p-sol { left: 494px; top: 0; width: 29px; }
.p-mass { left: 523px; top: 0; width: 45px; }
.p-adapt { left: 568px; top: 0; width: 29px; }
.p-tools { left: 490px; top: 289px; width: 50px; height: 34px; }
.p-loads { left: 263px; top: -1px; width: 180px; height: 48px; }
.big h2 { height: 17px; font-size: 11px; line-height: 17px; padding-right: 2px; }
.big .x { width: 11px; height: 11px; }
.big svg { width: 17px; height: 17px; }
.big .more::after { border-width: 4px 3px 0; }
.big > div { padding: 0 5px 0 4px; }
.big .grip { height: 14px; }
.ring { position: absolute; left: 292px; top: 13px; width: 36px; height: 36px; border: 2px solid #c8401c; border-radius: 50%; background: rgba(170, 170, 240, .5); }
.step { position: absolute; width: 32px; height: 32px; border: 2px solid #d37a1a; border-radius: 50%; background: #fb9b38; color: #fff; font-size: 12px; font-weight: 700; line-height: 28px; text-align: center; }
.s1 { left: 273px; top: 47px; }
.s2 { left: 44px; top: 200px; }

/* Distributed Force dialog */
.dialog { position: absolute; right: 20px; top: 43px; width: 209px; border: 3px solid #0a45e0; border-top: 0; border-radius: 5px 5px 0 0; background: #0a45e0; color: #222; font-size: 10px; }
.dialog h2 { height: 24px; display: flex; align-items: center; justify-content: space-between; padding-left: 3px; color: #fff; font-size: 11px; background: linear-gradient(#1c6cf8, #0650e4 30%, #0650e4); border-radius: 4px 4px 0 0; }
.ctl { display: flex; gap: 2px; }
.ctl button { width: 16px; height: 16px; border: 1px solid #fff; border-radius: 2px; background: #2c62e8; position: relative; }
.ctl svg { display: block; width: 10px; height: 10px; margin: 2px; }
.ctl .min::after { content: ""; position: absolute; left: 3px; bottom: 3px; width: 6px; height: 2px; background: #fff; }
.ctl .max { border-color: #6c8ef0; }
.ctl .max::after { content: ""; position: absolute; left: 3px; top: 3px; width: 8px; height: 8px; border: 1px solid #6c8ef0; border-top-width: 2px; }
.ctl .close { background: #e2532d; }
.pane { height: 256px; padding: 5px 7px 5px 6px; background: radial-gradient(ellipse 26px 20px at 14px 256px, #1f435e 0 20%, #7d94a2 78%, #e8b660 80%, #f8c060 84%, transparent 100%), linear-gradient(90deg, #fdf1d8, #f9e7c4 25%, #f9e7c4); display: flex; flex-direction: column; }
.row { display: flex; align-items: center; gap: 2px; }
.row label { line-height: 12px; }
.row input { flex: 1; min-width: 0; width: 100%; height: 13px; padding: 0 1px; border: 1px solid #77736a; border-right-color: #fff; border-bottom-color: #fff; background: #fff; color: #222; font: 10px/11px "Liberation Sans", sans-serif; }
.framed { border: 1px solid #c8bfa8; padding: 0 1px 0 2px; height: 17px; }
.sup { height: 23px; border-top: 0; padding-right: 0; }
.row .face { margin: 0 3px 0 4px; height: 12px; background: #3162c4; color: #fff; padding-left: 3px; }
.cells { width: 22px; height: 22px; border: 1px solid #fff; border-right: 2px solid #444; border-bottom: 2px solid #444; background: #f5ead2; flex: none; }
.cells svg { display: block; width: 15px; height: 15px; margin: 2px; }
fieldset { margin: 0; min-width: 0; border: 1px solid #c8bfa8; padding: 0 1px 0 2px; }
legend { padding: 0 2px; margin-left: 5px; line-height: 12px; }
.axis { height: 76px; }
.axis .row { gap: 3px; margin-top: 2px; }
.large { flex: 1; height: 14px; }
.large select { font-size: 10px; line-height: 12px; }
.large::before { width: 13px; }
.large::after { right: 4px; top: 5px; border-width: 4px 3px 0; }
.check { display: flex; align-items: center; gap: 4px; margin-top: 3px; line-height: 12px; }
.check input { appearance: none; width: 10px; height: 10px; margin: 0; border: 1px solid #444; background: #fff; }
.vec { height: 91px; padding-right: 5px; margin-top: -1px; }
.vec .row { height: 19px; gap: 1px; }
.sel { position: relative; flex: 1; display: flex; }
.sel input { background: linear-gradient(90deg, #3162c4 23px, #fff 23px); color: #fff; }
.hand { margin-top: 1px; height: 18px; }
.actions { display: flex; justify-content: flex-end; gap: 6px; margin-top: 6px; }
.actions button { width: 55px; height: 17px; padding: 0 3px; display: flex; align-items: center; gap: 4px; border: 1px solid #fff; border-right: 2px solid #555; border-bottom: 2px solid #555; background: #d2d0df; }
.actions span { flex: 1; text-align: center; }
.dot { width: 9px; height: 9px; border-radius: 50%; flex: none; }
.green { background: radial-gradient(circle at 35% 35%, #bfb, #1a9c1e 50%, #063); }
.red { background: radial-gradient(circle at 35% 35%, #fcc, #d8261e 50%, #700); }

.ds { width: 24px; color: #24336e; font-size: 5px; font-weight: 700; line-height: 5px; text-align: center; }
.ds svg { display: block; width: 22px; height: 12px; }
```
